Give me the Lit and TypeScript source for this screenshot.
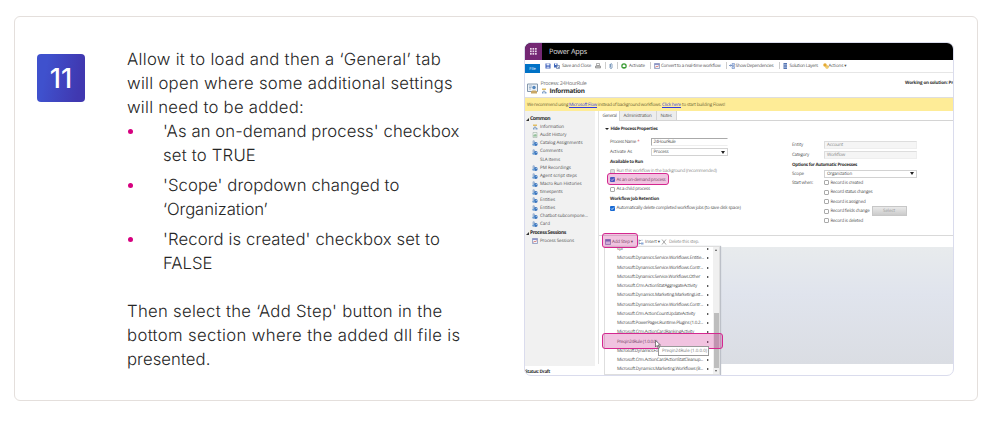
import { LitElement, html, css, svg } from 'lit';
import { customElement, property } from 'lit/decorators.js';

const icons: Record<string, unknown> = {
  save: svg`<path d="M1 1h9l1 1v9H1z" fill="#3457b5"/><path d="M3 1h6v4H3z" fill="#e9effb"/><path d="M3 7h6v4H3z" fill="#b9c8ea"/>`,
  saveClose: svg`<path d="M0 1h7v8H0z" fill="#3d66bd"/><path d="M2 1h3v3H2z" fill="#fff"/><path d="M5 5h6v6H5z" fill="#d8e2f3" stroke="#3b5485"/><path d="M7 7l3 3" stroke="#3b5485"/>`,
  print: svg`<path d="M3 1h6v4H3z" fill="#fff" stroke="#666"/><path d="M1 6h10v4H1z" fill="#c9c9c9" stroke="#666"/>`,
  clip: svg`<path d="M4 2v8q2 2 4 0V2q-2-2-3 0v6" fill="none" stroke="#6c8db4" stroke-width="1.6"/>`,
  activate: svg`<circle cx="6" cy="6" r="5.5" fill="#3c9c35"/><path d="M6 2.5L9.5 6 8 8H4L2.5 6z" fill="#fff"/>`,
  convert: svg`<path d="M1 1h10v10H1z" fill="#eef3fc" stroke="#8392b9" stroke-width="1.5"/><path d="M1 1h10v3H1z" fill="#9096c8"/><path d="M3 9l2-3 2 2 2-3" stroke="#d3564b" fill="none" stroke-width="1.4"/>`,
  deps: svg`<path d="M0 5h5M3 3l2 2-2 2" stroke="#3763ab" fill="none" stroke-width="1.3"/><path d="M6 1h5v4H6zM6 7h5v4H6z" fill="#c4d5f1" stroke="#5a79b5"/>`,
  layers: svg`<path d="M3 0h7v12H3z" fill="#5575b2"/><path d="M3 3h7M3 6h7M3 9h7" stroke="#cddaf0"/>`,
  actions: svg`<circle cx="4" cy="4" r="3.5" fill="#e4a931"/><circle cx="8" cy="8" r="3.5" fill="#eabb43"/><circle cx="8" cy="8" r="1.2" fill="#fff"/>`,
  process: svg`<path d="M2 1h8v3H2z" fill="#e0bd65"/><path d="M6 4v3M3 7h6" stroke="#55789f"/><path d="M2 8h3v3H2zM7 8h4v3H7z" fill="#7c9fca"/>`,
  audit: svg`<path d="M2 1h8v10H2z" fill="#edf4ed" stroke="#94a69b"/><path d="M4 9V6M6 9V4M8 9V5" stroke="#4c9958" stroke-width="1.3"/>`,
  entity: svg`<path d="M3 0l3 2v4H1V2z" fill="#a3b9d6"/><circle cx="7.5" cy="8" r="3.8" fill="#3974bd"/><circle cx="3" cy="9" r="2.5" fill="#6d9ed2"/><circle cx="8.5" cy="7" r="1.2" fill="#c2daf2"/>`,
  step: svg`<path d="M1 1h10v10H1z" fill="#d5def4" stroke="#6779b3" stroke-width="1.4"/><path d="M1 1h10v4H1z" fill="#6276b8"/>`,
  insert: svg`<path d="M2 1v10M2 3h4M2 9h4" stroke="#687590" fill="none" stroke-width="1.3"/><path d="M6 7h5v4H6z" fill="#8caad8"/><path d="M6 1h4v3H6z" fill="#dbe3ee"/>`,
  remove: svg`<path d="M2 1l8 10M10 1L2 11" stroke="#8d8d8d" stroke-width="1.5"/>`,
};

const icon = (name: string) =>
  html`<svg class="icon" viewBox="0 0 12 12">${icons[name]}</svg>`;

// text set to an exact width by spreading the difference over its letters
@customElement('fit-label')
export class FitLabel extends LitElement {
  @property() text = '';
  @property({ type: Number }) width = 0;

  static styles = css`
    :host {
      display: inline-block;
      flex: none;
      white-space: pre;
    }
  `;

  render() {
    return html`<span>${this.text}</span>`;
  }

  updated() {
    const span = this.renderRoot.querySelector('span')!;
    span.style.letterSpacing = '0';
    const diff = this.width - span.getBoundingClientRect().width;
    span.style.letterSpacing = `${diff / this.text.length}px`;
  }
}

const fit = (text: string, width: number) =>
  html`<fit-label .text=${text} .width=${width}></fit-label>`;

@customElement('workflow-window')
export class WorkflowWindow extends LitElement {
  commands = [
    { icon: 'save', gap: 5 },
    { icon: 'saveClose', gap: 3 },
    { label: 'Save and Close', width: 29, gap: 2 },
    { icon: 'print', gap: 4 },
    { sep: true, gap: 3.5 },
    { icon: 'clip', gap: 2.5 },
    { sep: true, gap: 3 },
    { icon: 'activate', gap: 3 },
    { label: 'Activate', width: 16, gap: 2 },
    { sep: true, gap: 5 },
    { icon: 'convert', gap: 2.5 },
    { label: 'Convert to a real-time workflow', width: 59.5, gap: 1.5 },
    { sep: true, gap: 5 },
    { icon: 'deps', gap: 2 },
    { label: 'Show Dependencies', width: 38, gap: 1 },
    { sep: true, gap: 5 },
    { icon: 'layers', gap: 2 },
    { label: 'Solution Layers', width: 28.5, gap: 2 },
    { icon: 'actions', gap: 4.5 },
    { label: 'Actions ▾', width: 18, gap: 0 },
  ];

  nav = [
    ['process', 'Information', 24],
    ['audit', 'Audit History', 26.5],
    ['entity', 'Catalog Assignments', 42.5],
    ['entity', 'Comments', 22.5],
    ['', 'SLA Items', 20],
    ['entity', 'PM Recordings', 31],
    ['entity', 'Agent script steps', 37],
    ['entity', 'Macro Run Histories', 41.5],
    ['entity', 'timespents', 22.5],
    ['entity', 'Entities', 15],
    ['entity', 'Entities', 15],
    ['entity', 'Chatbot subcompone...', 48],
    ['entity', 'Card', 10],
  ] as [string, string, number][];

  menu = [
    ['spl', 6],
    ['Microsoft.Dynamics.Service.Workflows.Entitie...', 87],
    ['Microsoft.Dynamics.Service.Workflows.Contr...', 86],
    ['Microsoft.Dynamics.Service.Workflows.Other', 83],
    ['Microsoft.Crm.ActionStatAggregateActivity', 80],
    ['Microsoft.Dynamics.Marketing.MarketingList...', 86],
    ['Microsoft.Dynamics.Service.Workflows.Contr...', 86],
    ['Microsoft.Crm.ActionCountUpdateActivity', 78],
    ['Microsoft.PowerPages.Runtime.Plugins (1.0.2...', 86],
    ['Microsoft.Crm.ActionCardRankingActivity', 77],
    ['Preqin24Rule (1.0.0.0)', 40],
    ['Microsoft.Dynamics.Fo', 41],
    ['Microsoft.Crm.ActionCardActionStatCleanup...', 86],
    ['Microsoft.Dynamics.Marketing.Workflows (B...', 86],
  ] as [string, number][];

  triggers = [
    ['Record is created', 32.5],
    ['Record status changes', 42],
    ['Record is assigned', 35],
    ['Record fields change', 39],
    ['Record is deleted', 32.5],
  ] as [string, number][];

  static styles = css`
    :host {
      display: block;
      position: relative;
      box-sizing: border-box;
      width: 430px;
      height: 334px;
      border: 1px solid #dadced;
      border-radius: 7px;
      overflow: hidden;
      background: #fff;
      font: 4.5px/8px "Open Sans", "Noto Sans", sans-serif;
      color: #505050;
      text-rendering: geometricPrecision;
    }
    svg {
      display: block;
      flex: none;
    }
    b, .bold {
      font-weight: 700;
      color: #303030;
    }
    .icon {
      width: 6px;
      height: 6px;
    }
    .top {
      display: flex;
      align-items: center;
      gap: 7px;
      height: 17px;
      background: #000;
      color: #ddd;
      font-size: 7.3px;
    }
    .waffle {
      display: grid;
      place-items: center;
      width: 17px;
      height: 17px;
      background: #742774;
    }
    .commands {
      display: flex;
      align-items: center;
      box-sizing: border-box;
      height: 13px;
      padding-bottom: 1px;
      border-bottom: 1px solid #e6e6e6;
    }
    .file {
      align-self: flex-end;
      width: 15px;
      height: 9px;
      margin-bottom: -2px;
      background: #0072c6;
      color: #fff;
      line-height: 11px;
      text-align: center;
      font-size: 4px;
    }
    .sep {
      width: 1px;
      height: 7px;
      background: #ccc;
    }
    .title {
      display: flex;
      align-items: center;
      gap: 2.5px;
      height: 24px;
      padding-left: 2px;
    }
    .title .form {
      width: 11px;
      height: 11px;
      margin-top: 6px;
    }
    .names {
      flex: 1;
      padding-top: 3px;
    }
    .process {
      font-size: 5.4px;
      color: #777;
    }
    .info {
      display: flex;
      align-items: center;
      gap: 3px;
      font-size: 6.4px;
    }
    .solution {
      margin-bottom: 5px;
    }
    .notice {
      box-sizing: border-box;
      height: 14px;
      padding-left: 2px;
      border-top: 1px solid #dedede;
      background: #feec97;
      line-height: 14px;
      color: #6d6433;
    }
    .notice .link-text fit-label {
      color: #2f3ae0;
      text-decoration: underline 0.5px;
    }
    .body {
      display: flex;
      gap: 3px;
      height: 255px;
    }
    .nav {
      box-sizing: border-box;
      width: 70px;
      padding-top: 4.6px;
      background: #f1f1f1;
      line-height: 8.1px;
    }
    .group {
      display: flex;
      align-items: center;
      height: 7.6px;
      font-size: 5.1px;
      font-family: "Noto Sans", sans-serif;
    }
    .group.second {
      margin-top: 1px;
    }
    .group::before {
      content: "";
      border-left: 3px solid transparent;
      border-bottom: 3px solid #333;
      margin: 0 1.5px 0 0.5px;
    }
    .link {
      display: flex;
      align-items: center;
      gap: 2px;
      height: 8.1px;
      padding-left: 7px;
    }
    .blank {
      width: 6px;
    }
    .main {
      flex: 1;
      display: flex;
      flex-direction: column;
      border-left: 1px solid #e2e2e2;
      height: 253px;
      box-sizing: border-box;
    }
    .tabs {
      display: flex;
      height: 9px;
      border-bottom: 1px solid #d4d4d4;
      line-height: 11px;
    }
    .tab {
      box-sizing: border-box;
      padding-left: 3.5px;
      background: #ededed;
      border-right: 1px solid #d4d4d4;
    }
    .tab.on {
      width: 21px;
      background: #fff;
      height: 10px;
    }
    .tab.admin {
      width: 37px;
    }
    .tab.notes {
      width: 20px;
    }
    .panel {
      display: flex;
      box-sizing: border-box;
      height: 115px;
      border-bottom: 1px solid #d9d9d9;
    }
    .left {
      box-sizing: border-box;
      display: grid;
      grid-template-rows: 9.6px 3.4px 10px 10px 9.4px 8.4px 9.4px 9.4px 10.6px 7.4px;
      align-items: center;
      align-content: start;
      width: 193px;
      padding: 3.5px 0 0 11px;
    }
    .row {
      display: flex;
      align-items: center;
    }
    .section {
      margin-left: -5px;
    }
    .section::before {
      content: "";
      border: 2px solid transparent;
      border-top: 2.5px solid #222;
      border-bottom: 0;
      margin-right: 1.5px;
    }
    .name {
      width: 40.5px;
    }
    .name i {
      color: #d22;
      font-style: normal;
    }
    .field {
      display: flex;
      align-items: center;
      justify-content: space-between;
      box-sizing: border-box;
      width: 77px;
      height: 8px;
      padding: 0 2px;
      border: 1px solid #d2d2d2;
      line-height: 6px;
    }
    .field.input {
      border-color: #aaa transparent #eee #aaa;
    }
    .field.select::after {
      content: "";
      border: 2px solid transparent;
      border-top: 3px solid #222;
      border-bottom: 0;
    }
    .field.locked {
      background: #f5f5f5;
      color: #888;
      border-color: #ddd #eee #eee #ddd;
    }
    .check {
      box-sizing: border-box;
      flex: none;
      width: 5px;
      height: 5px;
      margin-right: 1.5px;
      border: 1px solid #aaa;
      border-radius: 1px;
      background: #fff;
    }
    .check.grey {
      background: #ddd;
      border-color: #c4c4c4;
    }
    .check.on {
      border: 0;
      background: #1769d3;
    }
    .check svg {
      width: 5px;
      height: 5px;
    }
    .dim {
      color: #8a8a8a;
    }
    .right {
      display: grid;
      grid-template-columns: 32px 93px;
      grid-template-rows: 10px 10px 10px 8.8px repeat(5, 9.4px);
      align-items: center;
      align-content: start;
      padding-top: 18.5px;
    }
    .right .field {
      width: 93px;
    }
    .wide {
      grid-column: 1 / 3;
    }
    .option {
      grid-column: 2;
      display: flex;
      align-items: center;
    }
    .button {
      width: 33px;
      height: 8px;
      margin-left: 3px;
      background: linear-gradient(#e9e9e9, #cbcbcb);
      outline: 0.5px solid #c7c7c7;
      text-align: center;
      color: #999;
    }
    .tools {
      display: flex;
      align-items: center;
      gap: 1px;
      height: 11px;
      padding-left: 6px;
    }
    .tools .insert {
      margin-left: 4px;
    }
    .tools .remove {
      display: flex;
      align-items: center;
      gap: 2px;
      margin-left: 0;
    }
    .canvas {
      flex: 1;
      margin-left: 5px;
      background: linear-gradient(#e8ebed, #e0e4ed 40%, #dadde3);
    }
    .status {
      line-height: 12px;
      font-size: 4.7px;
    }
    .menu {
      position: absolute;
      left: 79px;
      top: 203px;
      display: flex;
      box-sizing: border-box;
      width: 116px;
      height: 129px;
      border: 1px solid #dedede;
      background: #fff;
      overflow: hidden;
      box-shadow: 1px 0 1px #bcc0c8;
    }
    .items {
      flex: 1;
      margin-top: -2.6px;
    }
    .item {
      display: flex;
      align-items: center;
      justify-content: space-between;
      height: 9.27px;
      padding: 0 4px 0 12px;
    }
    .item::after {
      content: "";
      border: 1.5px solid transparent;
      border-left: 2.5px solid #222;
      border-right: 0;
    }
    .scroll {
      display: flex;
      flex-direction: column;
      align-items: center;
      justify-content: space-between;
      box-sizing: border-box;
      width: 6px;
      padding: 2px 0;
      background: #f0f0f0;
    }
    .scroll::before, .scroll::after {
      content: "";
      border: 1.5px solid transparent;
      border-bottom: 2px solid #555;
      border-top: 0;
    }
    .scroll::after {
      transform: rotate(180deg);
    }
    .thumb {
      width: 5px;
      height: 55px;
      margin-top: 59px;
      background: #bdbdbd;
    }
    .mark {
      position: absolute;
      box-sizing: border-box;
      border: 1.5px solid #d4288f;
      border-radius: 3px;
      background: rgba(205, 40, 145, 0.28);
    }
    .mark.demand {
      left: 82px;
      top: 130px;
      width: 62px;
      height: 12px;
    }
    .mark.add {
      left: 77px;
      top: 190px;
      width: 36px;
      height: 15px;
    }
    .mark.rule {
      left: 77px;
      top: 290px;
      width: 121px;
      height: 16px;
    }
    .tip {
      position: absolute;
      left: 133px;
      top: 303px;
      box-sizing: border-box;
      width: 51px;
      height: 10px;
      padding-left: 3px;
      border: 1px solid #999;
      background: #fff;
      color: #777;
    }
    .cursor {
      position: absolute;
      left: 130px;
      top: 297px;
      width: 6px;
      height: 9px;
    }
  `;

  checked() {
    return html`
      <div class="check on">
        <svg viewBox="0 0 10 10"><path d="M2 5l2 2 4-4" fill="none" stroke="#fff" stroke-width="1.6"/></svg>
      </div>`;
  }

  render() {
    return html`
      <div class="top">
        <div class="waffle">
          <svg width="7" height="7" viewBox="0 0 7 7" fill="#ead7ea">
            ${[0, 2.5, 5].map((y) => [0, 2.5, 5].map((x) => svg`<rect x=${x} y=${y} width="1.7" height="1.7"/>`))}
          </svg>
        </div>
        ${fit('Power Apps', 38)}
      </div>
      <div class="commands">
        <div class="file">File</div>
        ${this.commands.map((c) => html`
          <div style="margin-left: ${c.gap}px">
            ${c.sep ? html`<div class="sep"></div>` : c.icon ? icon(c.icon) : fit(c.label!, c.width!)}
          </div>`)}
      </div>
      <div class="title">
        <svg class="form" viewBox="0 0 22 22">
          <path d="M1 2h20v15H1z" fill="#edf2f7" stroke="#8498ad" stroke-width="2"/>
          <path d="M4 6h6M4 9h5M4 12h4" stroke="#8aa4c0" stroke-width="1.5"/>
          <circle cx="14" cy="9" r="3.5" fill="#5588be"/>
          <path d="M8 21v-4l3-2h6l3 2v4z" fill="#c9a765"/>
        </svg>
        <div class="names">
          <div class="process">${fit('Process: 24HourRule', 46)}</div>
          <div class="info">${icon('process')}<b>${fit('Information', 35)}</b></div>
        </div>
        <b class="solution">${fit('Working on solution: Pr', 48)}</b>
      </div>
      <div class="notice">${fit('We recommend using ', 42)}<span class="link-text">${fit('Microsoft Flow', 28)}</span>${fit(' instead of background workflows. ', 65)}<span class="link-text">${fit('Click here', 19)}</span>${fit(' to start building Flows!', 44)}</div>
      <div class="body">
        <div class="nav">
          <div class="group bold">${fit('Common', 20)}</div>
          ${this.nav.map(([name, label, width]) => html`
            <div class="link">${name ? icon(name) : html`<div class="blank"></div>`}${fit(label, width)}</div>`)}
          <div class="group second bold">${fit('Process Sessions', 36)}</div>
          <div class="link">${icon('convert')}${fit('Process Sessions', 34)}</div>
        </div>
        <div class="main">
          <div class="tabs">
            <div class="tab on">${fit('General', 14)}</div>
            <div class="tab admin">${fit('Administration', 28)}</div>
            <div class="tab notes">${fit('Notes', 11)}</div>
          </div>
          <div class="panel">
            <div class="left">
              <div class="row section bold">${fit('Hide Process Properties', 47)}</div>
              <div></div>
              <div class="row"><div class="name">${fit('Process Name', 26)}<i> *</i></div><div class="field input">${fit('24HourRule', 22)}</div></div>
              <div class="row"><div class="name">${fit('Activate As', 22)}</div><div class="field select">${fit('Process', 15)}</div></div>
              <b>${fit('Available to Run', 33)}</b>
              <div class="row dim"><div class="check grey"></div>${fit('Run this workflow in the background (recommended)', 100)}</div>
              <div class="row">${this.checked()}${fit('As an on-demand process', 49)}</div>
              <div class="row"><div class="check"></div>${fit('As a child process', 33.5)}</div>
              <b>${fit('Workflow Job Retention', 49)}</b>
              <div class="row">${this.checked()}${fit('Automatically delete completed workflow jobs (to save disk space)', 124)}</div>
            </div>
            <div class="right">
              <div>${fit('Entity', 11)}</div><div class="field locked">${fit('Account', 16)}</div>
              <div>${fit('Category', 17)}</div><div class="field locked">${fit('Workflow', 18)}</div>
              <b class="wide">${fit('Options for Automatic Processes', 65)}</b>
              <div>${fit('Scope', 12)}</div><div class="field select">${fit('Organization', 25)}</div>
              <div>${fit('Start when:', 21)}</div>
              ${this.triggers.map(([label, width], i) => html`
                <div class="option">
                  <div class="check"></div>${fit(label, width)}
                  ${i === 3 ? html`<div class="button">${fit('Select', 12)}</div>` : ''}
                </div>`)}
            </div>
          </div>
          <div class="tools">
            ${icon('step')}${fit('Add Step ▾', 21)}
            <div class="insert">${icon('insert')}</div>${fit('Insert ▾', 15)}
            <div class="remove dim">${icon('remove')}${fit('Delete this step.', 30)}</div>
          </div>
          <div class="canvas"></div>
        </div>
      </div>
      <div class="status bold">${fit('Status: Draft', 25)}</div>
      <div class="menu">
        <div class="items">
          ${this.menu.map(([label, width]) => html`<div class="item">${fit(label, width)}</div>`)}
        </div>
        <div class="scroll"><div class="thumb"></div></div>
      </div>
      <div class="mark demand"></div>
      <div class="mark add"></div>
      <div class="mark rule"></div>
      <div class="tip">${fit('Preqin24Rule (1.0.0.0)', 45)}</div>
      <svg class="cursor" viewBox="0 0 12 18">
        <path d="M1 1v13l3-3 3 6 2-1-3-6h5z" fill="#fff" stroke="#444" stroke-width="1.3"/>
      </svg>
    `;
  }
}

@customElement('app-root')
export class AppRoot extends LitElement {
  intro = [
    ['Allow it to load and then a ‘General’ tab', 314],
    ['will open where some additional settings', 326],
    ['will need to be added:', 177],
  ] as [string, number][];

  bullets = [
    [["'As an on-demand process' checkbox", 296.5], ['set to TRUE', 93]],
    [["'Scope' dropdown changed to", 236.5], ['‘Organization’', 104.5]],
    [["'Record is created' checkbox set to", 277], ['FALSE', 49.5]],
  ] as [string, number][][];

  outro = [
    ["Then select the ‘Add Step' button in the", 315.5],
    ['bottom section where the added dll file is', 333.5],
    ['presented.', 83.5],
  ] as [string, number][];

  static styles = css`
    :host {
      display: block;
      box-sizing: border-box;
      height: 421px;
      padding: 16px 22px 20px 14px;
      background: #fff;
      font-family: Inter, "Open Sans", sans-serif;
    }
    .card {
      display: flex;
      box-sizing: border-box;
      height: 385px;
      padding: 25px 23px 0 22px;
      border: 1px solid #e4dfdc;
      border-radius: 6px;
    }
    .badge {
      width: 48px;
      height: 48px;
      margin-top: 12px;
      border-radius: 4px;
      background: linear-gradient(100deg, #3f51cd 20%, #4038b0 85%);
      color: #fff;
      font: 500 27px/50px Inter, sans-serif;
      text-align: center;
    }
    .text {
      width: 355px;
      margin: 6px 0 0 42px;
      font-size: 16.7px;
      font-weight: 300;
      line-height: 24px;
      color: #262626;
      text-rendering: geometricPrecision;
    }
    .line {
      height: 24px;
    }
    ul {
      display: grid;
      gap: 6px;
      margin: 0 0 24px;
      padding: 0;
      list-style: none;
    }
    li {
      display: flex;
      gap: 30px;
    }
    li::before {
      content: "";
      width: 5px;
      height: 5px;
      margin: 9px 0 0 1px;
      border-radius: 50%;
      background: #d6007f;
    }
    workflow-window {
      margin-left: 42px;
      flex: none;
    }
  `;

  lines(rows: [string, number][]) {
    return rows.map(([text, width]) => html`<div class="line">${fit(text, width)}</div>`);
  }

  render() {
    return html`
      <div class="card">
        <div class="badge">11</div>
        <div class="text">
          ${this.lines(this.intro)}
          <ul>
            ${this.bullets.map((b) => html`<li><div>${this.lines(b)}</div></li>`)}
          </ul>
          ${this.lines(this.outro)}
        </div>
        <workflow-window></workflow-window>
      </div>
    `;
  }
}
